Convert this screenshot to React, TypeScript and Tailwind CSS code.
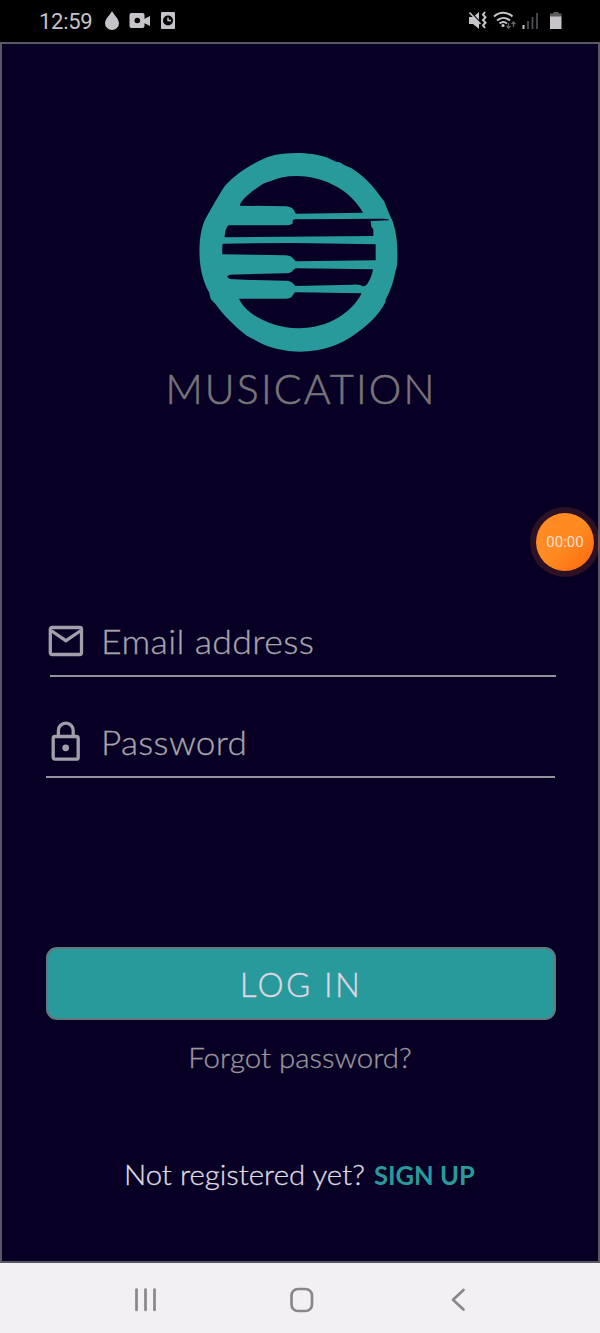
import type { ReactNode } from "react";

function StatusBar() {
  return (
    <header className="flex h-[42px] items-center justify-between bg-black pr-[37px] pl-[39px] text-[#c6c3c9]">
      <div className="flex items-center">
        <span className="w-[54px] pt-[2px] font-['Roboto',sans-serif] text-[22px] leading-[40px] tracking-[-0.3px] whitespace-nowrap">12:59</span>
        <svg className="ml-[11px]" width="16" height="42" viewBox="0 0 16 42" fill="currentColor">
          <path d="M8 11C6.5 14.5 1 18.5 1 23.5a7 6.5 0 0 0 14 0C15 18.5 9.500 14.500 8 11Z" />
        </svg>
        <svg className="ml-[9px]" width="22" height="42" viewBox="0 0 22 42">
          <rect x="0.500" y="13" width="15" height="15" rx="2" fill="currentColor" />
          <path d="M15 19l6-3v10l-6-3Z" fill="currentColor" />
          <circle cx="8.300" cy="20.500" r="2.800" fill="#000" />
        </svg>
        <svg className="ml-[9px]" width="16" height="42" viewBox="0 0 16 42">
          <rect x="1" y="12" width="14" height="17" rx="1" fill="currentColor" />
          <circle cx="8" cy="20.500" r="5" fill="#000" />
          <path d="M8 17.500v3h3" fill="none" stroke="currentColor" strokeWidth="1.500" />
        </svg>
      </div>
      <svg width="96" height="42" viewBox="467 0 96 42">
        <path d="M469 17h4l6-5v17l-6-5h-4Z" fill="currentColor" />
        <path d="M470.500 12l10.500 11" stroke="#000" strokeWidth="1.500" />
        <path d="M469.500 12.500l11 11.500" stroke="currentColor" strokeWidth="1.700" />
        <path d="M485 12l-2 2.600 2.500 2.700-2.500 2.700 2.500 2.700-2.500 2.700 2 2.600" fill="none" stroke="currentColor" strokeWidth="2" />
        <g fill="none" stroke="currentColor" strokeWidth="2">
          <path d="M494 16.500c5.500-5 13-5 18.500 0" />
          <path d="M497 20.500c4-3.500 9-3.500 13 0" />
          <path d="M499.500 23.500c2.500-2 5-2 7.500 0" />
        </g>
        <circle cx="503" cy="25.500" r="1.600" fill="currentColor" />
        <g fill="none" stroke="#66636b" strokeWidth="1.300">
          <path d="M508.500 23v5M506.500 26l2 2 2-2M513.500 27v-5M511.500 24l2-2 2 2" />
        </g>
        <path d="M523.500 25v4" stroke="currentColor" strokeWidth="2" />
        <path d="M528 21v8M532.500 17v12M537 13v16" stroke="#4e4c52" strokeWidth="1.800" />
        <path d="M553.500 12h5v1.500h3V17h-11.500v-3.500h3.500Z" fill="#5e5b61" />
        <path d="M550 16.500h11.500V29H550Z" fill="currentColor" />
      </svg>
    </header>
  );
}

function Logo() {
  return (
    <svg width="215" height="215" viewBox="0 0 645 645" role="img" aria-label="Musication">
      <path
        fill="#289a9b"
        d="M322 24C352 24 385 29 408 36L438 50C448 50 456 54 462 60L485 70C523 94 552 127 574 158L582 168L598 208L608 229C620 266 622 294 622 330C622 358 620 372 617 376C612 405 603 435 587 464L586 472C570 504 540 537 500 564L492 570C453 597 401 620 330 620C283 619 238 609 204 590L170 572C130 541 102 512 77 478L62 462L57 441C43 418 33 385 30 352C26 309 29 262 44 226C60 196 79 164 97 134L105 122C137 87 178 59 235 35C264 26 293 24 322 24Z"
      />
      <g fill="#080024">
        <path d="M150 181C151 169 177 145 206 125L222 115L245 107C265 98 289 93 319 93C410 94 485 141 519 203L317 206C312 192 304 185 288 184L151 182Z" />
        <path d="M117 241H290Q306 240 308 235V226L314 223L580 221L596 223V226L542 228L544 245L550 253V273L104 277C105 261 109 243 117 241Z" />
        <path d="M98 296L310 294L557 298V346L317 349C308 337 302 332 287 331L97 328Q96 308 98 296Z" />
        <path d="M120 389L290 385Q306 384 309 376L317 370L549 373C546 391 537 413 528 421Q520 427 512 421Q506 417 485 419L316 423C307 411 301 407 287 407L180 405L121 402Q103 396 120 389Z" />
        <path d="M147 461H290Q306 460 308 451L315 442L515 445C484 505 413 550 325 550C244 549 169 509 147 461Z" />
      </g>
    </svg>
  );
}

function MailIcon() {
  return (
    <svg width="36" height="34" viewBox="0 0 36 34" fill="none" stroke="#a29faa" strokeWidth="3.300">
      <rect x="2.300" y="3.500" width="31.200" height="27" rx="1.800" />
      <path d="M3 6.500l14.900 10.200L33 6.500" />
    </svg>
  );
}

function LockIcon() {
  return (
    <svg className="mt-[2px]" width="36" height="42" viewBox="0 0 36 42" fill="none" stroke="#a29faa" strokeWidth="3.300">
      <rect x="5.200" y="15.500" width="25" height="22.700" rx="1.800" />
      <path d="M10.400 15V9.500a7.400 7.400 0 0 1 14.800 0V15" />
      <circle cx="17.700" cy="26.800" r="3.400" fill="#a29faa" stroke="none" />
    </svg>
  );
}

function Field({ icon, children }: { icon: ReactNode; children: ReactNode }) {
  return (
    <div className="flex h-[58px] items-center">
      <div className="ml-[2px] flex w-[53px] shrink-0">{icon}</div>
      {children}
    </div>
  );
}

export default function App() {
  return (
    <div className="flex h-[1333px] w-[600px] flex-col overflow-hidden bg-[#f2f0f3] font-['Lato',sans-serif]">
      <StatusBar />
      <main className="relative flex h-[1221px] flex-col border-2 border-[#5b5663] bg-[#080024] px-[44px]">
        <div className="mt-[101px] ml-[144px] h-[215px]">
          <Logo />
        </div>
        <h1 className="h-[58px] pl-[2px] text-center text-[41px] leading-[58px] font-light tracking-[2.2px] whitespace-nowrap text-[#77737a] [-webkit-text-stroke:0.6px_#77737a]">MUSICATION</h1>

        <form className="mt-[194px] flex flex-col">
          <Field icon={<MailIcon />}>
            <label className="origin-left scale-x-[1.083] text-[33px] leading-[50px] font-light tracking-[0.3px] whitespace-nowrap text-[#a7a4ad] [-webkit-text-stroke:0.3px_#a7a4ad]">Email address</label>
          </Field>
          <div className="mt-[5px] ml-1 h-[2px] w-[506px] bg-[#96929c]" />
          <div className="mt-[35px]">
            <Field icon={<LockIcon />}>
              <label className="origin-left scale-x-[1.065] pt-px text-[33px] leading-[50px] font-light tracking-[0.3px] whitespace-nowrap text-[#a7a4ad] [-webkit-text-stroke:0.3px_#a7a4ad]">Password</label>
            </Field>
          </div>
          <div className="mt-[6px] h-[2px] w-[509px] bg-[#96929c]" />
          <button type="button" className="mt-[169px] h-[73px] w-[510px] rounded-[11px] border-2 border-[#64777e] bg-[#289a9b] pt-[2px] text-[33px] font-light tracking-[2.4px] text-[#dcd7e0] [-webkit-text-stroke:0.4px_#dcd7e0]">
            LOG IN
          </button>
        </form>

        <a className="mt-[18px] block h-[40px] origin-center scale-x-[1.09] text-center text-[27px] leading-[40px] font-light whitespace-nowrap text-[#9a969e] [-webkit-text-stroke:0.3px_#9a969e]">Forgot password?</a>
        <p className="mt-[77px] flex h-[40px] items-center pl-[78px] text-[27px] leading-[40px] font-light whitespace-nowrap text-[#dfdce2]">
          <span className="w-[250px] origin-left scale-x-[1.088] [-webkit-text-stroke:0.3px_#dfdce2]">Not registered yet?</span>
          <span className="origin-left scale-x-[0.945] font-bold text-[#289a9b]">SIGN UP</span>
        </p>

        <div className="absolute top-[463px] left-[528px] flex size-[70px] items-center justify-center rounded-full border-[6px] border-[#ff7a2a]/15 bg-linear-to-br from-[#ff8b22] from-50% to-[#ff6508] bg-clip-padding font-['Roboto',sans-serif] text-[15px] text-[#f4dfd3]">
          00:00
        </div>
      </main>
      <nav className="flex h-[70px] items-center text-[#89878c]">
        <svg width="600" height="70" viewBox="0 1263 600 70" fill="none" stroke="currentColor" strokeWidth="2.700" strokeLinecap="round" strokeLinejoin="round">
          <path d="M136.500 1289.500v20.500M145.500 1289.500v20.500M154.500 1289.500v20.500" />
          <rect x="291.500" y="1289" width="20.500" height="22" rx="6.500" />
          <path d="M463.500 1290l-10.500 9.800 10.500 9.800" />
        </svg>
      </nav>
    </div>
  );
}
